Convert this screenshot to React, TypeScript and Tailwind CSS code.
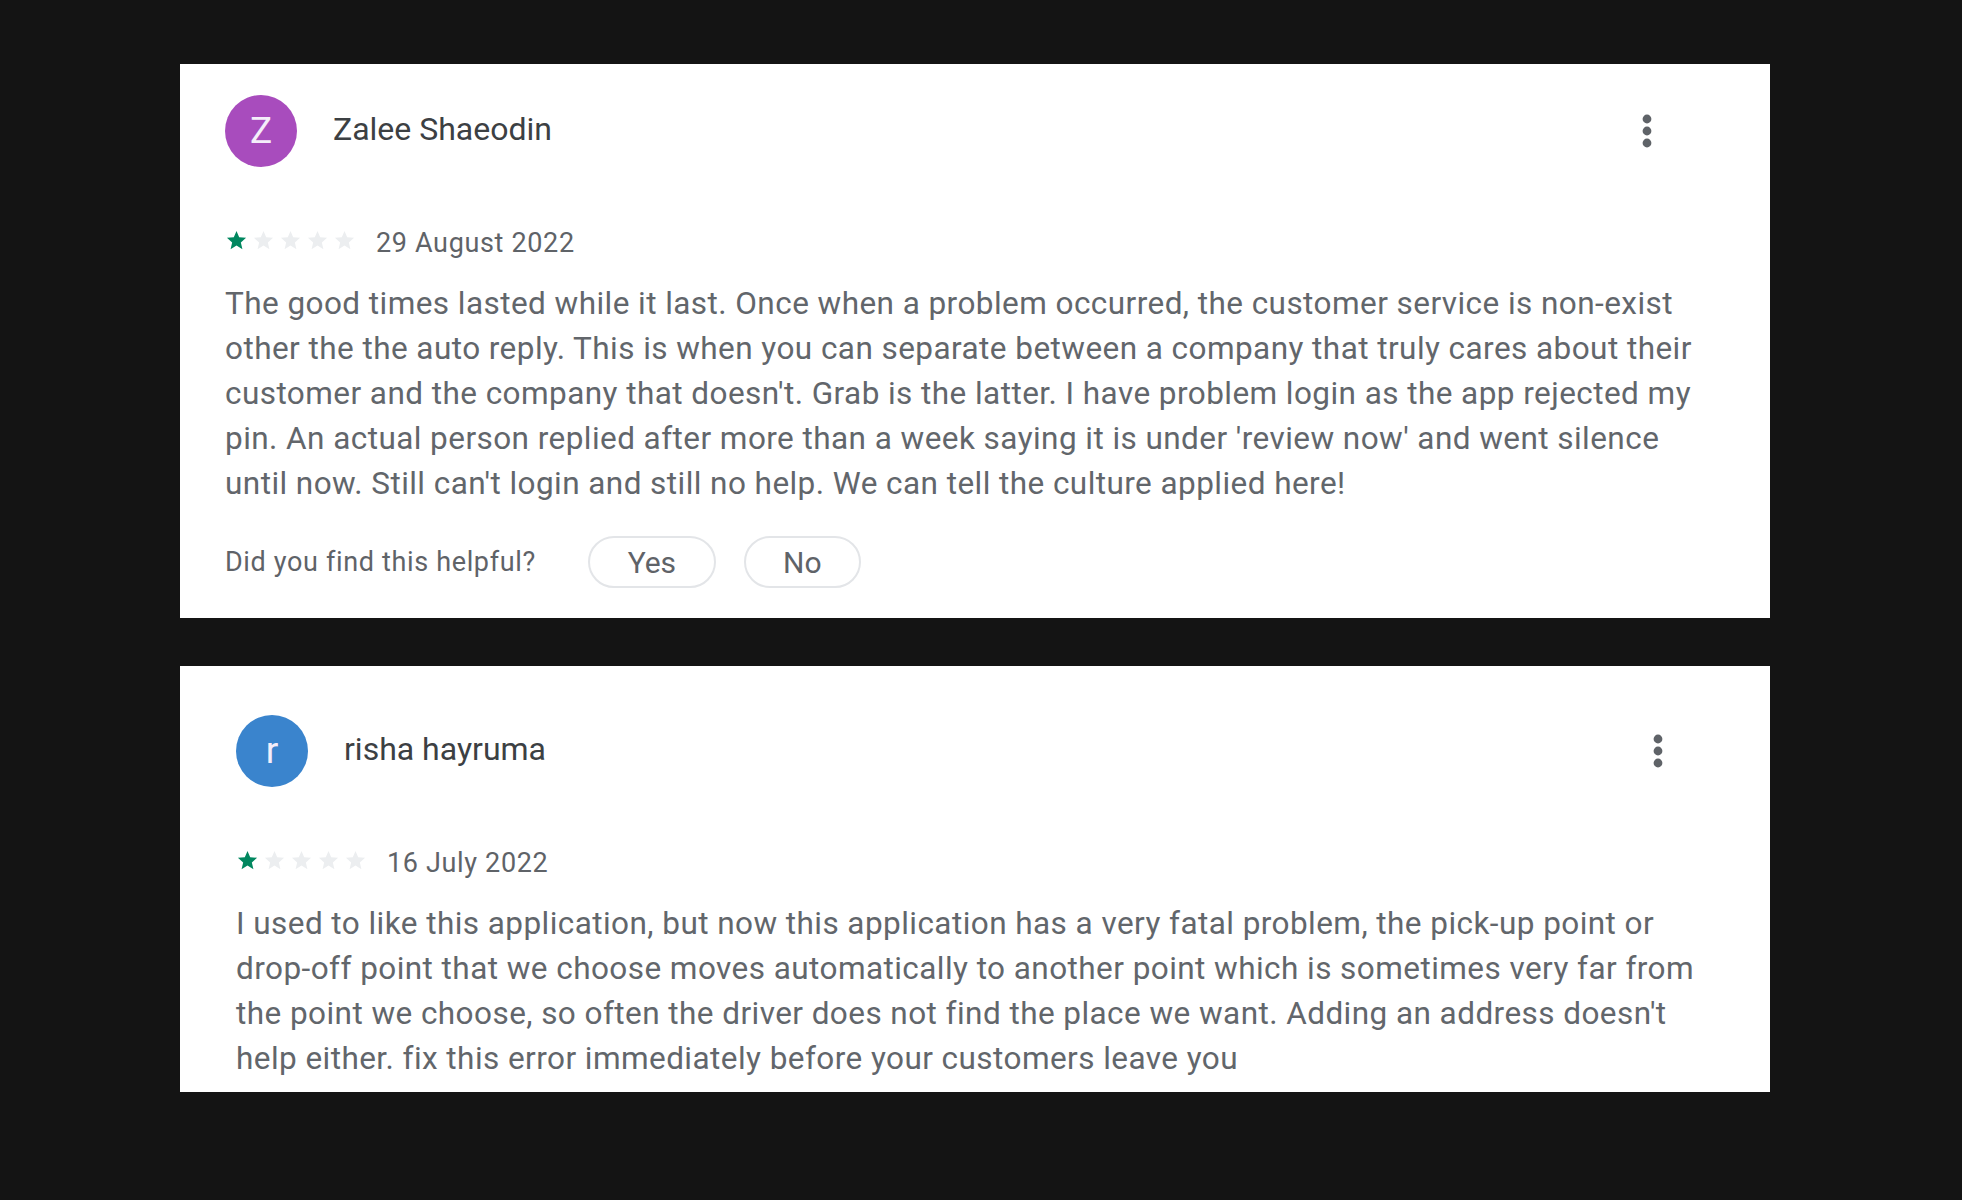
import React from 'react'

type Review = {
  initial: string
  name: string
  avatarColor: string
  date: string
  rating: number
  body: string
  helpful: boolean
}

const reviews: Review[] = [
  {
    initial: 'Z',
    name: 'Zalee Shaeodin',
    avatarColor: 'bg-[#a84cbd]',
    date: '29 August 2022',
    rating: 1,
    body: "The good times lasted while it last. Once when a problem occurred, the customer service is non-exist other the the auto reply. This is when you can separate between a company that truly cares about their customer and the company that doesn't. Grab is the latter. I have problem login as the app rejected my pin. An actual person replied after more than a week saying it is under 'review now' and went silence until now. Still can't login and still no help. We can tell the culture applied here!",
    helpful: true,
  },
  {
    initial: 'r',
    name: 'risha hayruma',
    avatarColor: 'bg-[#3a84cd]',
    date: '16 July 2022',
    rating: 1,
    body: "I used to like this application, but now this application has a very fatal problem, the pick-up point or drop-off point that we choose moves automatically to another point which is sometimes very far from the point we choose, so often the driver does not find the place we want. Adding an address doesn't help either. fix this error immediately before your customers leave you",
    helpful: false,
  },
]

const Star = ({ filled }: { filled: boolean }) => (
  <svg viewBox='0 0 24 24' className='w-[23px] h-[23px]'>
    <path
      d='M12 17.27L18.18 21l-1.64-7.03L22 9.24l-7.19-.61L12 2 9.19 8.63 2 9.24l5.46 4.73L5.82 21z'
      fill={filled ? '#01875f' : '#eceef0'}
    />
  </svg>
)

const MoreIcon = () => (
  <svg viewBox='0 0 24 24' className='w-[48px] h-[48px]'>
    <circle cx='12' cy='6' r='2.2' fill='#5f6368' />
    <circle cx='12' cy='12' r='2.2' fill='#5f6368' />
    <circle cx='12' cy='18' r='2.2' fill='#5f6368' />
  </svg>
)

const ReviewCard = ({ review, className }: { review: Review; className: string }) => {
  return (
    <div className={`bg-white overflow-hidden ${className}`}>
      <div className='w-[1480px]'>
        <div className='flex items-center h-[72px]'>
          <div className={`w-[72px] h-[72px] rounded-full flex items-center justify-center text-[#f4eefa] text-[37px] ${review.avatarColor}`}>
            {review.initial}
          </div>
          <div className='ml-[36px] mb-[5px] text-[32px] text-[#3c4043] grow'>{review.name}</div>
          <div className='mr-[34px]'>
            <MoreIcon />
          </div>
        </div>

        <div className='flex items-center mt-[62px] h-[28px]'>
          <div className='flex gap-[4px] mb-[6px]'>
            {[1, 2, 3, 4, 5].map((i) => (
              <Star key={i} filled={i <= review.rating} />
            ))}
          </div>
          <div className='ml-[20px] text-[27px] tracking-[0.65px] text-[#5f6368]'>{review.date}</div>
        </div>

        <p className='mt-[24px] text-[31.5px] leading-[45px] tracking-[0.44px] text-[#62666b]'>{review.body}</p>

        {review.helpful && (
          <div className='flex items-center mt-[30px]'>
            <span className='text-[27px] tracking-[0.65px] text-[#5f6368]'>Did you find this helpful?</span>
            <button className='ml-[52px] h-[52px] w-[128px] rounded-full border-2 border-[#e3e5e8] text-[30px] text-[#5f6368]'>
              Yes
            </button>
            <button className='ml-[28px] h-[52px] w-[117px] rounded-full border-2 border-[#e3e5e8] text-[30px] text-[#5f6368]'>
              No
            </button>
          </div>
        )}
      </div>
    </div>
  )
}

const App = () => {
  return (
    <div className='w-[1962px] h-[1200px] bg-[#141414] font-["Roboto",sans-serif]'>
      <div className='pt-[64px] pl-[180px] w-[1770px]'>
        <ReviewCard review={reviews[0]} className='h-[554px] pl-[45px] pt-[31px]' />
        <div className='h-[48px]' />
        <ReviewCard review={reviews[1]} className='h-[426px] pl-[56px] pt-[49px]' />
      </div>
    </div>
  )
}

export default App
